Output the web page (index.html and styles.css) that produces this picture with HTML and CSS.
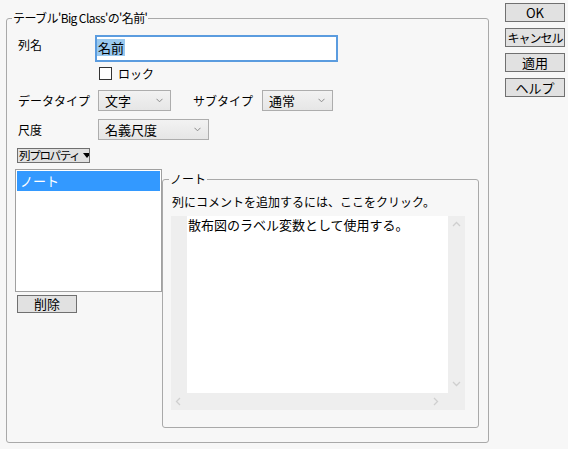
FILE: index.html
```html
<!DOCTYPE html>
<html lang="ja">
<head>
<meta charset="utf-8">
<link rel="stylesheet" href="styles.css">
</head>
<body>
<div class="window">
  <fieldset class="group main">
    <legend class="legend legend-main">テーブル'Big Class'の'名前'</legend>
    <div class="form">
      <div class="row row-name">
        <span class="lbl">列名</span>
        <div class="textbox"><span class="seltext">名前</span></div>
      </div>
      <div class="row row-lock">
        <span class="check"></span><span class="check-lbl">ロック</span>
      </div>
      <div class="row row-type">
        <span class="lbl">データタイプ</span>
        <div class="combo combo-type"><span>文字</span><svg class="chev" width="7" height="5" viewBox="0 0 7 5"><path d="M0.5 0.8 L3.5 3.8 L6.5 0.8" fill="none" stroke="#8a8a8a" stroke-width="1"/></svg></div>
        <span class="lbl lbl-sub">サブタイプ</span>
        <div class="combo combo-sub"><span>通常</span><svg class="chev" width="7" height="5" viewBox="0 0 7 5"><path d="M0.5 0.8 L3.5 3.8 L6.5 0.8" fill="none" stroke="#8a8a8a" stroke-width="1"/></svg></div>
      </div>
      <div class="row row-scale">
        <span class="lbl">尺度</span>
        <div class="combo combo-scale"><span>名義尺度</span><svg class="chev" width="7" height="5" viewBox="0 0 7 5"><path d="M0.5 0.8 L3.5 3.8 L6.5 0.8" fill="none" stroke="#8a8a8a" stroke-width="1"/></svg></div>
      </div>
    </div>
    <div class="menu-btn"><span class="menu-txt">列プロパティ</span><span class="tri"></span></div>
    <div class="props">
      <div class="left-col">
        <div class="list"><div class="item item-sel">ノート</div></div>
        <div class="btn btn-del">削除</div>
      </div>
      <fieldset class="group note">
        <legend class="legend legend-note">ノート</legend>
        <p class="hint">列にコメントを追加するには、ここをクリック。</p>
        <div class="editor">
          <div class="gutter"></div>
          <div class="edit-area">散布図のラベル変数として使用する。</div>
          <div class="vscroll">
            <svg width="9" height="6" viewBox="0 0 9 6"><path d="M1 5 L4.5 1.5 L8 5" fill="none" stroke="#cfcfcf" stroke-width="1.3"/></svg>
            <svg width="9" height="6" viewBox="0 0 9 6"><path d="M1 1 L4.5 4.5 L8 1" fill="none" stroke="#cfcfcf" stroke-width="1.3"/></svg>
          </div>
          <div class="hscroll">
            <svg width="6" height="9" viewBox="0 0 6 9"><path d="M5 1 L1.5 4.5 L5 8" fill="none" stroke="#cfcfcf" stroke-width="1.3"/></svg>
            <svg width="6" height="9" viewBox="0 0 6 9"><path d="M1 1 L4.5 4.5 L1 8" fill="none" stroke="#cfcfcf" stroke-width="1.3"/></svg>
          </div>
          <div class="corner"></div>
        </div>
      </fieldset>
    </div>
  </fieldset>
  <div class="actions">
    <div class="btn act">OK</div>
    <div class="btn act act-narrow">キャンセル</div>
    <div class="btn act">適用</div>
    <div class="btn act">ヘルプ</div>
  </div>
</div>
</body>
</html>
```
FILE: styles.css
```css
* { box-sizing: border-box; }
html, body { margin: 0; padding: 0; }
body {
  background: #f7f7f7;
  font-family: "Noto Sans CJK JP", "Noto Sans", sans-serif;
  font-size: 12px;
  color: #000;
  width: 568px;
  height: 449px;
  overflow: hidden;
}
.window {
  display: flex;
  align-items: flex-start;
}
.group {
  margin: 0;
  padding: 0;
  border: 1px solid #a9a9a9;
  border-radius: 3px;
  min-width: 0;
}
.legend {
  padding: 0 1px;
  height: 14px;
  line-height: 14px;
  font-size: 12px;
  white-space: nowrap;
}
.main {
  margin: 11px 0 0 6px;
  width: 483px;
  height: 432px;
}
.main > .legend-main { margin-left: 5px; letter-spacing: -0.6px; }

.form { padding-left: 11px; }
.row { display: flex; align-items: center; }
.lbl { width: 77px; flex: none; line-height: 14px; white-space: nowrap; }
.row-name { margin-top: 10px; height: 27px; align-items: flex-start; }
.row-name .lbl { padding-top: 3px; }
.textbox {
  width: 243px;
  height: 27px;
  border: 2px solid #5b9cdf;
  background: #fff;
  padding: 2px 0 0 0;
  line-height: 17px;
}
.seltext {
  background: #99c9ef;
  padding: 0 1px;
  display: inline-block;
  font-size: 13px;
  line-height: 17px;
}
.row-lock { margin-top: 5px; height: 13px; padding-left: 81px; }
.check {
  width: 13px; height: 13px;
  border: 1px solid #333;
  background: #fff;
  flex: none;
}
.check-lbl { margin-left: 6px; line-height: 13px; }

.row-type { margin-top: 10px; height: 21px; }
.row-scale { margin-top: 8px; height: 21px; }
.combo {
  height: 21px;
  border: 1px solid #adadad;
  background: linear-gradient(#f2f2f2, #e6e6e6);
  display: flex;
  align-items: center;
  justify-content: space-between;
  padding: 0 7px 0 6px;
  margin-left: 3px;
  flex: none;
  font-size: 13px;
}
.combo-type { width: 73px; }
.combo-sub { width: 71px; margin-left: 0; }
.combo-scale { width: 111px; }
.lbl-sub { width: 69px; margin-left: 22px; }
.chev { flex: none; }

.menu-btn {
  margin: 8px 0 0 10px;
  width: 73px;
  height: 15px;
  border: 1px solid #6f6f6f;
  background: #e1e1e1;
  display: flex;
  align-items: center;
  padding-left: 1px;
  white-space: nowrap;
  overflow: hidden;
}
.menu-txt {
  font-size: 11.5px;
  letter-spacing: -1.3px;
  line-height: 13px;
}
.tri {
  width: 0; height: 0;
  border-left: 4.5px solid transparent;
  border-right: 4.5px solid transparent;
  border-top: 5px solid #000;
  margin-left: 3px;
  flex: none;
}

.props {
  display: flex;
  align-items: flex-start;
  margin: 6px 0 0 8px;
}
.left-col { width: 147px; flex: none; }
.list {
  width: 147px;
  height: 123px;
  border: 1px solid #a0a0a0;
  background: #fff;
  padding: 1px;
}
.item {
  height: 20px;
  line-height: 20px;
  padding-left: 3px;
  font-size: 13px;
}
.item-sel { background: #3399ff; color: #fff; }
.btn {
  border: 1px solid #707070;
  background: #e1e1e1;
  text-align: center;
  white-space: nowrap;
  overflow: hidden;
}
.btn-del {
  margin: 3px 0 0 2px;
  width: 60px;
  height: 18px;
  line-height: 16px;
  font-size: 13px;
}

.note {
  margin-top: 3px;
  width: 317px;
  height: 256px;
  padding: 0 0 0 9px;
}
.note > .legend-note { margin-left: -3px; }
.hint {
  margin: 9px 0 0 0;
  line-height: 14px;
  height: 14px;
  white-space: nowrap;
}
.editor {
  margin: 7px 0 0 -1px;
  width: 294px;
  height: 194px;
  background: #eeeeee;
  display: grid;
  grid-template-columns: 16px 261px 17px;
  grid-template-rows: 177px 17px;
}
.gutter { grid-column: 1; grid-row: 1; }
.edit-area {
  grid-column: 2; grid-row: 1;
  background: #fff;
  font-size: 13px;
  line-height: 15px;
  padding: 1px 0 0 1px;
  white-space: nowrap;
  overflow: hidden;
}
.vscroll {
  grid-column: 3; grid-row: 1;
  display: flex;
  flex-direction: column;
  justify-content: space-between;
  align-items: center;
  padding: 5px 0 6px 0;
}
.hscroll {
  grid-column: 1 / 3; grid-row: 2;
  display: flex;
  justify-content: space-between;
  align-items: center;
  padding: 0 9px 0 4px;
}
.corner { grid-column: 3; grid-row: 2; }

.actions {
  margin: 3px 0 0 16px;
  display: flex;
  flex-direction: column;
  gap: 6px;
}
.act {
  width: 60px;
  height: 19px;
  line-height: 17px;
  font-size: 13px;
}
.act-narrow {
  font-size: 12px;
  letter-spacing: -1px;
}
```
